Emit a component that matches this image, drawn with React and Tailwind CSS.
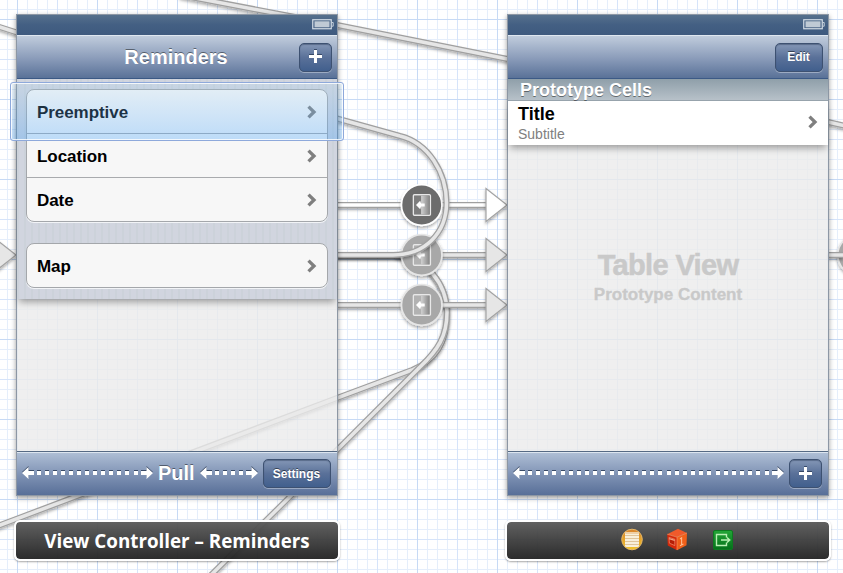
import React from 'react';

const FONT = "font-['Liberation_Sans',Arial,sans-serif]";

function Wire({ d, inner = '#e6e6e6', outer = '#a0a0a0' }) {
  return (
    <g fill="none" filter="url(#wireShadow)">
      <path d={d} stroke={outer} strokeWidth="6" />
      <path d={d} stroke={inner} strokeWidth="3.5" />
    </g>
  );
}

function ArrowHead({ x, y, fill }) {
  return (
    <path
      d={`M${x - 21} ${y - 16.5}L${x} ${y}L${x - 21} ${y + 16.5}Z`}
      fill={fill}
      stroke="#a3a3a3"
      strokeWidth="1.2"
      filter="url(#wireShadow)"
    />
  );
}

function SegueBadge({ x, y, fill, ring }) {
  return (
    <g transform={`translate(${x} ${y})`}>
      <circle r="20.3" fill={fill} stroke={ring} strokeWidth="1.8" filter="url(#wireShadow)" />
      <rect x="-8.3" y="-10.3" width="17" height="20.6" rx="1" fill={fill} stroke="#e8e8e8" strokeWidth="1.4" />
      <rect x="-7.2" y="-9.2" width="7" height="18.4" fill="#ffffff" opacity="0.12" />
      <rect x="-0.6" y="-9.4" width="8.4" height="18.8" fill="url(#door)" />
      <path d="M-5.7 0L-1.5 -4.2L-0.6 -1.6H3V1.6H-0.6L-1.5 4.2Z" fill="#fff" />
    </g>
  );
}

function Grid() {
  const lines = (size) => `M0.5 0V${size}M0 0.5H${size}`;
  return (
    <>
      <defs>
        <pattern id="g10" x="7" y="9" width="10" height="10" patternUnits="userSpaceOnUse">
          <path d={lines(10)} stroke="#e5eefb" />
        </pattern>
        <pattern id="g40" x="17" y="19" width="40" height="40" patternUnits="userSpaceOnUse">
          <path d={lines(40)} stroke="#d6e4fa" />
        </pattern>
        <pattern id="g80" x="17" y="19" width="80" height="80" patternUnits="userSpaceOnUse">
          <path d={lines(80)} stroke="#c7daf5" />
        </pattern>
      </defs>
      <rect width="843" height="573" fill="url(#g10)" />
      <rect width="843" height="573" fill="url(#g40)" />
      <rect width="843" height="573" fill="url(#g80)" />
    </>
  );
}

function Canvas() {
  return (
    <svg className="absolute inset-0" width="843" height="573" viewBox="0 0 843 573">
      <defs>
        <filter id="wireShadow" filterUnits="userSpaceOnUse" x="-500" y="-400" width="1900" height="1400">
          <feDropShadow dx="0" dy="2" stdDeviation="1.5" floodColor="#000" floodOpacity="0.32" />
        </filter>
        <linearGradient id="door">
          <stop offset="0" stopColor="#d2d2d2" />
          <stop offset="1" stopColor="#868686" />
        </linearGradient>
      </defs>
      <Grid />
      <Wire d="M180 -5L337 25L510 59.5" />
      <Wire d="M-5 25.5L20 33.5" />
      <Wire d="M828 122L850 127" />
      <SegueBadge x={858} y={255} fill="#a8a8a8" ring="#e6e6e6" />
      <Wire d="M828 255H843" />
      <Wire d="M337 255H395C428 258 446.5 285 447 312C447 344 436 360 412 370L337 398L-5 527" />
      <Wire d="M395 255C428 258 446.5 285 447 312C447 336 438 350 420 367L337 450L205 581" />
      <Wire d="M337 305H490" />
      <Wire d="M337 255H490" />
      <Wire d="M337 205H490" inner="#ffffff" />
      <ArrowHead x={507} y={205} fill="#ffffff" />
      <ArrowHead x={507} y={255} fill="#e6e6e6" />
      <ArrowHead x={507} y={305} fill="#e6e6e6" />
      <ArrowHead x={16} y={255} fill="#e6e6e6" />
      <SegueBadge x={421.7} y={305} fill="#a8a8a8" ring="#e6e6e6" />
      <SegueBadge x={421.7} y={255} fill="#a8a8a8" ring="#e6e6e6" />
      <SegueBadge x={421.7} y={205} fill="#6c6c6c" ring="#ffffff" />
      <Wire d="M337 118.5L400 136C428 143 446.5 172 446.5 203C446.5 233 425 255 393 255H337" />
    </svg>
  );
}

function Battery() {
  return (
    <svg width="22" height="11" viewBox="0 0 22 11">
      <rect x="0.75" y="0.75" width="18.5" height="9" fill="none" stroke="#d3dce6" strokeWidth="1.2" />
      <rect x="2.5" y="2.3" width="15" height="6" fill="#bfcad5" />
      <path d="M19.5 3.5H21.2V7.2H19.5" fill="none" stroke="#c6d0db" />
    </svg>
  );
}

function StatusBar() {
  return (
    <div className="flex h-5 shrink-0 items-center justify-end bg-linear-to-b from-[#56708c] via-[#435f83] to-[#3f5a7e] pb-px pr-[3px]">
      <Battery />
    </div>
  );
}

function BarButton({ width, children }) {
  return (
    <div
      className={`${width} flex h-[29px] shrink-0 items-center justify-center rounded-[5px] border border-[#3d5171] bg-linear-to-b from-[#8497b6] via-[#5a7199] to-[#415f8d] text-[12px] font-bold text-white shadow-[0_1px_0_rgba(255,255,255,.35),inset_0_1px_1px_rgba(30,45,75,.4)] [text-shadow:0_-1px_0_rgba(0,0,0,.5)]`}
    >
      {children}
    </div>
  );
}

function Plus() {
  return (
    <svg className="-ml-px -mt-px" width="13" height="15" viewBox="0 0 13 15">
      <path d="M6.5 0V13M0 6.5H13" stroke="#22334f" strokeWidth="3" opacity="0.7" />
      <path d="M6.5 1V14M0 7.5H13" stroke="#fff" strokeWidth="3" />
    </svg>
  );
}

function Chevron() {
  return (
    <svg className="-mt-[2px]" width="10" height="14" viewBox="0 0 10 14">
      <path d="M1.5 1.6L7 7L1.5 12.4" fill="none" stroke="#7f7f7f" strokeWidth="3.3" />
    </svg>
  );
}

function FlexibleSpace({ width }) {
  const gaps = Math.round((width - 34.5) / 8.06);
  const step = (width - 34.5) / gaps;
  const dots = Array.from({ length: gaps + 1 }, (_, i) => Math.round(15 + i * step));
  const arrows = (dy) => (
    <>
      <path d={`M0 ${6 + dy}L6.5 ${dy}V${4 + dy}H12V${8 + dy}H6.5V${12 + dy}Z`} />
      <path d={`M${width} ${6 + dy}L${width - 6.5} ${dy}V${4 + dy}H${width - 12}V${8 + dy}H${width - 6.5}V${12 + dy}Z`} />
      {dots.map((x) => (
        <rect key={x} x={x} y={4 + dy} width="4" height="4" />
      ))}
    </>
  );
  return (
    <svg className="-mt-[2px] shrink-0" width={width} height="13" viewBox={`0 0 ${width} 13`}>
      <g fill="#2c3d58" opacity="0.85">{arrows(0)}</g>
      <g fill="#fff">{arrows(1)}</g>
    </svg>
  );
}

function Phone({ position, nav, toolbar, children }) {
  return (
    <section
      className={`absolute top-[14px] ${position} flex h-[482px] w-[322px] flex-col border border-[#8d97a4] shadow-[0_2px_5px_rgba(0,0,0,.4)]`}
    >
      <StatusBar />
      <header className="flex h-11 shrink-0 items-center border-b border-t border-b-[#3c5a86] border-t-[#dfe7f0] bg-linear-to-b from-[#c0ccdc] via-[#8e9fbc] to-[#5a7298] px-[5px]">
        {nav}
      </header>
      <div className="flex min-h-0 flex-1 flex-col bg-[#ebebeb]/80">{children}</div>
      <footer className="flex h-[44px] shrink-0 items-center border-t border-[#566a84] bg-linear-to-b from-[#b0c0d6] via-[#8295b6] to-[#586f98] shadow-[inset_0_1px_0_#dce5ef]">
        {toolbar}
      </footer>
    </section>
  );
}

function Cell({ label }) {
  return (
    <div className="flex h-[44px] items-center justify-between pl-[10px] pr-[10px] pt-[2px] first:h-[43px]">
      <span className="pt-px text-[17px] font-bold leading-5 tracking-[-0.06px] text-black">{label}</span>
      <Chevron />
    </div>
  );
}

function Group({ items }) {
  return (
    <div className="rounded-[8px] border border-[#a4a7ab] bg-[#f7f7f7] shadow-[0_1px_0_#f2f4f7] [&>*+*]:border-t [&>*+*]:border-[#a9abae]">
      {items.map((item) => (
        <Cell key={item} label={item} />
      ))}
    </div>
  );
}

function TitleBar({ position, children }) {
  return (
    <div
      className={`absolute top-[520px] ${position} flex h-[41px] w-[326px] items-center justify-center rounded-[6px] border-2 border-white bg-linear-to-b from-[#585858]/95 to-[#222222]/95 bg-clip-padding shadow-[0_1px_2px_rgba(0,0,0,.35)]`}
    >
      {children}
    </div>
  );
}

function ResponderIcon() {
  return (
    <svg width="22" height="23" viewBox="0 0 22 23">
      <defs>
        <linearGradient id="gold" x2="0" y2="1">
          <stop offset="0" stopColor="#d9822c" />
          <stop offset="1" stopColor="#f0c52a" />
        </linearGradient>
      </defs>
      <circle cx="11" cy="11.5" r="10.3" fill="url(#gold)" stroke="#e7b868" strokeWidth="1" />
      <rect x="4" y="4" width="14" height="15" rx="1.5" fill="#f8efd9" />
      <path d="M4 7.5H18M4 10.5H18M4 13.5H18M4 16.5H18" stroke="#d8b98a" strokeWidth="0.8" />
      <path d="M4.3 5H17.7" stroke="#eed0a6" strokeWidth="2" />
    </svg>
  );
}

function CubeIcon() {
  return (
    <svg width="22" height="23" viewBox="0 0 22 23">
      <path d="M1.2 6.2L12 0.8L21 5L11 9.2Z" fill="#ef5a2b" />
      <path d="M1.2 6.2L11 9.2V22.3L1.8 17.5Z" fill="#d5290a" />
      <path d="M11 9.2L21 5L20.5 17.3L11 22.3Z" fill="#f0601a" />
      <path d="M1.2 6.2L11 9.2L21 5M11 9.2V22" fill="none" stroke="#f89a6b" strokeWidth="0.6" />
      <path d="M3 9.4L8.8 11.2V17.6L3.4 15.2Z" fill="#b51e06" stroke="#ee8464" strokeWidth="0.8" />
      <path d="M3.2 10.6L8.8 12.4" stroke="#f3a083" strokeWidth="1.3" />
      <path d="M14 11L15.6 9.9V17M14 17.8L17.4 16.1" fill="none" stroke="#ffb98c" strokeWidth="1.1" />
    </svg>
  );
}

function ExitIcon() {
  return (
    <svg width="20" height="20" viewBox="0 0 20 20">
      <defs>
        <linearGradient id="exitGreen" x2="0" y2="1">
          <stop offset="0" stopColor="#23a637" />
          <stop offset="1" stopColor="#04701a" />
        </linearGradient>
      </defs>
      <rect x="0.5" y="0.5" width="19" height="19" rx="1.5" fill="url(#exitGreen)" stroke="#0c7a20" />
      <path d="M13.5 7.5V4.5H3.5V15.5H13.5V12.5" fill="none" stroke="#b9f0b4" strokeWidth="1.4" />
      <path d="M8 10H16M14 7.4L16.8 10L14 12.6" fill="none" stroke="#b9f0b4" strokeWidth="1.4" />
    </svg>
  );
}

export default function App() {
  return (
    <main className={`relative h-[573px] w-[843px] overflow-hidden bg-white ${FONT}`}>
      <Canvas />

      <Phone
        position="left-[16px]"
        nav={
          <>
            <h1 className="flex-1 pl-[31px] text-center text-[20px] font-bold text-white [text-shadow:0_-1px_0_rgba(0,0,0,.45)]">
              Reminders
            </h1>
            <BarButton width="w-[33px]">
              <Plus />
            </BarButton>
          </>
        }
        toolbar={
          <div className="flex w-full items-center pl-[5px] pr-[6px]">
            <FlexibleSpace width={131} />
            <span className="-mt-[2px] ml-[5px] w-[37px] text-[20px] font-bold leading-6 text-white [text-shadow:0_-1px_0_rgba(0,0,0,.45)]">
              Pull
            </span>
            <div className="ml-[5px] mr-auto flex">
              <FlexibleSpace width={58} />
            </div>
            <BarButton width="w-[68px]">
              <span className="pr-px pt-px">Settings</span>
            </BarButton>
          </div>
        }
      >
        <div className="flex h-[220px] shrink-0 flex-col gap-[21px] bg-[#d0d5df] bg-[repeating-linear-gradient(90deg,#ccd2da_0_2px,#d1d5df_2px_7px)] px-[9px] pt-[10px] shadow-[0_5px_7px_-2px_rgba(0,0,0,.35)]">
          <Group items={['Preemptive', 'Location', 'Date']} />
          <Group items={['Map']} />
        </div>
      </Phone>

      <div className="absolute left-[10px] top-[82px] h-[59px] w-[334px] rounded-[3px] border border-[#8ea9db] bg-linear-to-b from-[#a5d2ee]/20 to-[#4aa5fa]/34 shadow-[inset_0_0_0_1px_rgba(255,255,255,.8)]" />

      <Phone
        position="left-[507px]"
        nav={
          <div className="flex w-full justify-end">
            <BarButton width="w-[48px]">
              <span className="pr-px">Edit</span>
            </BarButton>
          </div>
        }
        toolbar={
          <div className="flex w-full items-center justify-between pl-[5px] pr-[6px]">
            <FlexibleSpace width={271} />
            <BarButton width="w-[33px]">
              <Plus />
            </BarButton>
          </div>
        }
      >
        <div className="h-[22px] shrink-0 border-b border-[#98a4ad] bg-linear-to-b from-[#8f9fa9] to-[#b7c1c9] pl-3 text-[18px] font-bold leading-[22px] text-white [text-shadow:0_1px_0_rgba(0,0,0,.45)]">
          Prototype Cells
        </div>
        <div className="flex h-[44px] shrink-0 items-center justify-between bg-white pl-[10px] pr-[10px] shadow-[0_5px_7px_-2px_rgba(0,0,0,.35)]">
          <div className="flex flex-col">
            <span className="text-[18px] font-bold leading-[21px] text-black">Title</span>
            <span className="text-[14px] leading-[18px] text-[#808080]">Subtitle</span>
          </div>
          <Chevron />
        </div>
        <div className="flex flex-1 flex-col items-center justify-center pb-[40px] font-bold text-[#c9c9c9]">
          <span className="text-[29px] leading-[33px] tracking-[-0.65px] [-webkit-text-stroke:0.5px_#c9c9c9]">Table View</span>
          <span className="pt-px text-[17px] leading-[24px] [-webkit-text-stroke:0.3px_#c9c9c9]">Prototype Content</span>
        </div>
      </Phone>

      <TitleBar position="left-[14px]">
        <span className="whitespace-nowrap pt-px font-['Open_Sans',sans-serif] text-[18.8px] font-bold leading-6 text-white">
          View Controller – Reminders
        </span>
      </TitleBar>
      <TitleBar position="left-[505px]">
        <div className="flex items-center pb-[2px] pl-[17px]">
          <ResponderIcon />
          <div className="ml-[23px] mr-[25px] flex">
            <CubeIcon />
          </div>
          <div className="pt-px">
            <ExitIcon />
          </div>
        </div>
      </TitleBar>
    </main>
  );
}
